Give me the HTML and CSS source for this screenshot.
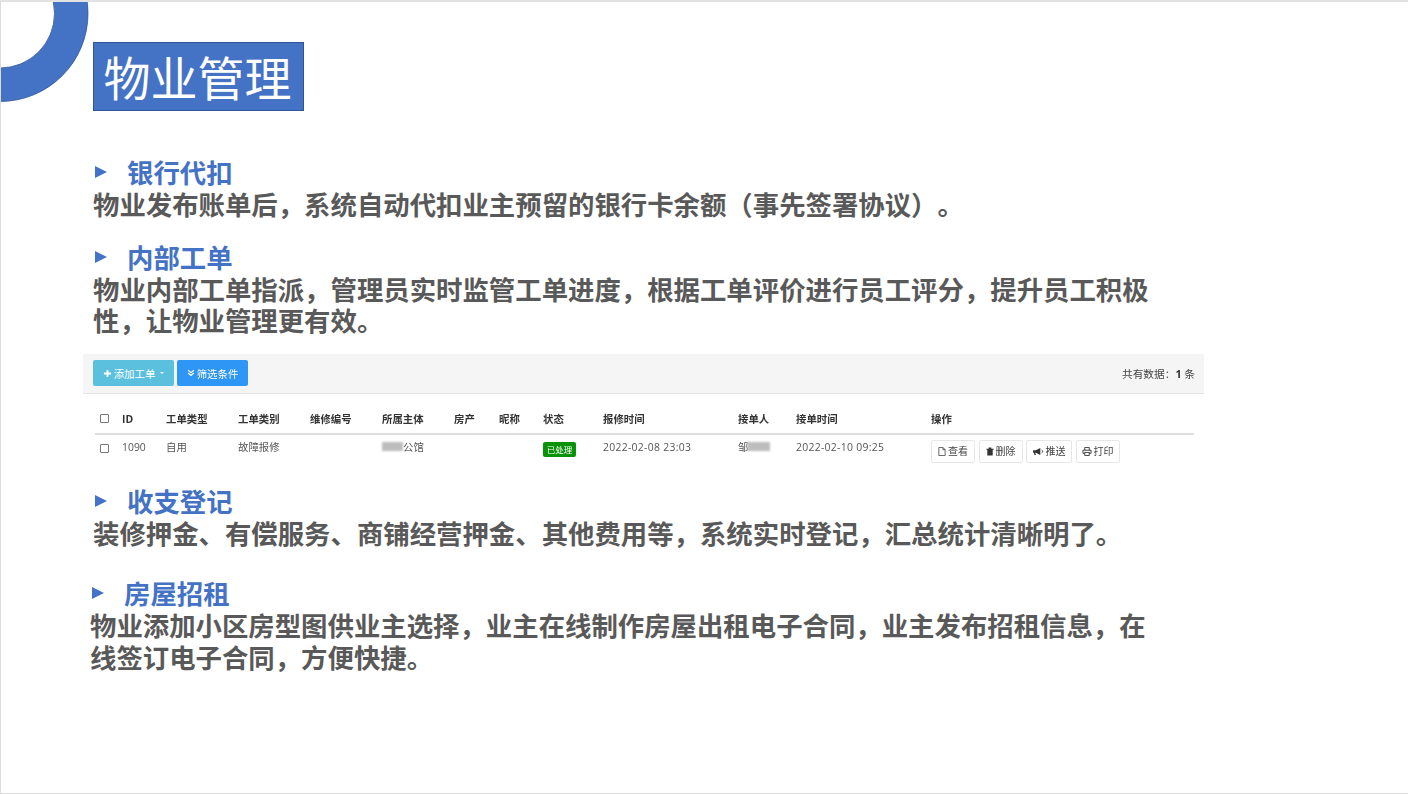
FILE: index.html
```html
<!DOCTYPE html>
<html lang="zh-CN">
<head>
<meta charset="utf-8">
<title>物业管理</title>
<link rel="stylesheet" href="styles.css">
</head>
<body>
<main class="slide">
  <svg class="ring" width="90" height="104" viewBox="0 0 90 104">
    <path fill-rule="evenodd" d="M-88 13.500a88 88 0 1 0 176 0a88 88 0 1 0 -176 0zM-54.500 13.500a54.500 54.500 0 1 0 109 0a54.500 54.500 0 1 0 -109 0z" fill="#4472c4" stroke="#2f5597" stroke-width=".8"/>
  </svg>
  <h1 class="title">物业管理</h1>

  <section class="item item-first">
    <h2 class="head"><span class="tri"></span>银行代扣</h2>
    <p class="body">物业发布账单后，系统自动代扣业主预留的银行卡余额（事先签署协议）。</p>
  </section>

  <section class="item item-second">
    <h2 class="head"><span class="tri"></span>内部工单</h2>
    <p class="body">物业内部工单指派，管理员实时监管工单进度，根据工单评价进行员工评分，提升员工积极性，让物业管理更有效。</p>
  </section>

  <div class="shot">
    <div class="toolbar">
      <div class="tools">
        <span class="btn btn-add">
          <svg class="ic" width="9" height="9" viewBox="0 0 10 10"><path d="M4 1h2v3h3v2H6v3H4V6H1V4h3z" fill="#fff"/></svg>添加工单<i class="caret"></i>
        </span>
        <span class="btn btn-filter">
          <svg class="ic" width="8" height="8" viewBox="0 0 10 10"><path d="M1.500 1.500 5 4.500l3.500-3M1.500 5 5 8l3.500-3" fill="none" stroke="#fff" stroke-width="1.500"/></svg>筛选条件
        </span>
      </div>
      <div class="total">共有数据：<b>1</b> 条</div>
    </div>
    <div class="grid grid-head">
      <span class="check"></span><span>ID</span><span>工单类型</span><span>工单类别</span><span>维修编号</span><span>所属主体</span><span>房产</span><span>昵称</span><span>状态</span><span>报修时间</span><span>接单人</span><span>接单时间</span><span>操作</span>
    </div>
    <div class="grid grid-row">
      <span class="check"></span><span>1090</span><span>自用</span><span>故障报修</span><span></span>
      <span class="cell-inline"><i class="mask mask-a"></i>公馆</span><span></span><span></span>
      <span><em class="badge">已处理</em></span>
      <span class="date">2022-02-08 23:03</span>
      <span class="cell-inline">邹<i class="mask mask-b"></i></span>
      <span class="date">2022-02-10 09:25</span>
      <span class="ops">
        <span class="op"><svg width="8" height="9" viewBox="0 0 8 10"><path d="M.5.500h4.500l2.500 2.500v6.500h-7zM5 .5V3h2.500" fill="none" stroke="#444" stroke-width=".9"/></svg>查看</span>
        <span class="op"><svg width="8" height="9" viewBox="0 0 8 10"><path d="M0 2h8v1H7v6.500H1V3H0zM2.500.500h3V2h-3z" fill="#333"/></svg>删除</span>
        <span class="op"><svg width="11" height="9" viewBox="0 0 12 10"><path d="M0 3.500h3L8 1v8L3 6.500H2.500L3 9H1.500L1 6.500H0z" fill="#333"/><path d="M9.500 3.500c1.500.5 1.500 2.500 0 3" fill="none" stroke="#333"/></svg>推送</span>
        <span class="op"><svg width="10" height="9" viewBox="0 0 10 10"><path d="M2.500 3.500v-3h5v3M2.500 7H.5V3.500h9V7h-2M2.500 6h5v3.500h-5z" fill="none" stroke="#333" stroke-width="1"/></svg>打印</span>
      </span>
    </div>
  </div>

  <section class="item item-third">
    <h2 class="head"><span class="tri"></span>收支登记</h2>
    <p class="body">装修押金、有偿服务、商铺经营押金、其他费用等，系统实时登记，汇总统计清晰明了。</p>
  </section>

  <section class="item item-fourth">
    <h2 class="head"><span class="tri"></span>房屋招租</h2>
    <p class="body">物业添加小区房型图供业主选择，业主在线制作房屋出租电子合同，业主发布招租信息，在线签订电子合同，方便快捷。</p>
  </section>
</main>
</body>
</html>
```
FILE: styles.css
```css
* { box-sizing: border-box; }
html, body { margin: 0; padding: 0; }
body { background: #fff; overflow: hidden; }
.slide {
  position: relative;
  width: 1408px;
  height: 794px;
  padding: 40px 0 0 92px;
  border-top: 2px solid #e2e2e2;
  border-left: 1px solid #dcdcdc;
  border-bottom: 1px solid #dcdcdc;
  font-family: "Noto Sans CJK SC", "Noto Sans", sans-serif;
  text-spacing-trim: space-all;
  overflow: hidden;
}
.ring { position: absolute; left: -1px; top: -2px; }
.title {
  width: 211px;
  height: 69px;
  margin: 0;
  padding-right: 2px;
  background: #4472c4;
  border: 1px solid #2f5597;
  color: #fff;
  font-size: 47px;
  font-weight: 400;
  line-height: 65px;
  text-align: center;
}
.item { width: 1070px; }
.item-first { margin-top: 45px; }
.item-second { margin-top: 21px; }
.item-third { margin-top: 19px; }
.item-fourth { margin: 29px 0 0 -3px; }
.head {
  display: flex;
  align-items: center;
  margin: 0;
  height: 32px;
  color: #4472c4;
  font-size: 26.400px;
  font-weight: 700;
  line-height: 32px;
}
.tri {
  width: 0;
  height: 0;
  margin: 0 20px 0 2px;
  border-left: 12px solid #4472c4;
  border-top: 6px solid transparent;
  border-bottom: 6px solid transparent;
}
.body {
  margin: 0;
  color: #595959;
  font-size: 26.400px;
  font-weight: 700;
  line-height: 31.500px;
}
.shot {
  width: 1121px;
  height: 112px;
  margin: 18px 0 0 -10px;
  font-family: "Open Sans", "Noto Sans CJK SC", sans-serif;
  font-size: 10.400px;
  color: #555;
  filter: blur(.35px);
}
.toolbar {
  display: flex;
  align-items: center;
  justify-content: space-between;
  height: 40px;
  padding: 0 9px 0 10px;
  background: #f5f5f5;
  border-bottom: 1px solid #e5e5e5;
}
.tools { display: flex; gap: 3px; }
.btn {
  display: flex;
  align-items: center;
  justify-content: center;
  gap: 2px;
  height: 26px;
  border-radius: 2px;
  color: #fff;
}
.btn-add { width: 81px; background: #5bc0de; }
.btn-filter { width: 71px; background: #2e96f5; }
.caret {
  width: 0;
  height: 0;
  margin-left: 3px;
  border-top: 2.500px solid #fff;
  border-left: 2.500px solid transparent;
  border-right: 2.500px solid transparent;
}
.total { color: #444; font-size: 10.700px; }
.total b { color: #333; }
.grid {
  display: grid;
  grid-template-columns: 22px 44px 72px 72px 72px 72px 45px 44px 60px 135px 58px 135px 1fr;
  width: 1099px;
  margin-left: 12px;
  padding-left: 5px;
  line-height: 14px;
}
.grid-head {
  align-items: center;
  height: 41px;
  padding-top: 11px;
  border-bottom: 2px solid #ddd;
  color: #333;
  font-weight: 700;
}
.grid-row {
  align-items: start;
  height: 30px;
  padding-top: 5px;
}
.check {
  width: 9px;
  height: 9px;
  background: #fff;
  border: 1px solid #777;
  border-radius: 1px;
}
.grid-row .check { margin-top: 4px; }
.cell-inline { display: flex; align-items: center; }
.mask { display: block; height: 9px; background: #bdbdbd; filter: blur(1.200px); }
.mask-a { width: 21px; }
.mask-b { width: 23px; margin-left: -1px; }
.date { letter-spacing: .3px; }
.badge {
  display: block;
  width: 33px;
  height: 15px;
  margin-top: 2px;
  background: #0a920a;
  border-radius: 2px;
  color: #fff;
  font-size: 8.500px;
  font-style: normal;
  line-height: 15px;
  text-align: center;
}
.ops { display: flex; gap: 3.500px; }
.op {
  display: flex;
  align-items: center;
  justify-content: center;
  gap: 2px;
  height: 23px;
  background: #fff;
  border: 1px solid #e6e6e6;
  border-radius: 2px;
  font-size: 10px;
  color: #444;
  white-space: nowrap;
}
.op:nth-child(1) { width: 44px; }
.op:nth-child(2) { width: 44px; }
.op:nth-child(3) { width: 46px; }
.op:nth-child(4) { width: 44px; }
```
